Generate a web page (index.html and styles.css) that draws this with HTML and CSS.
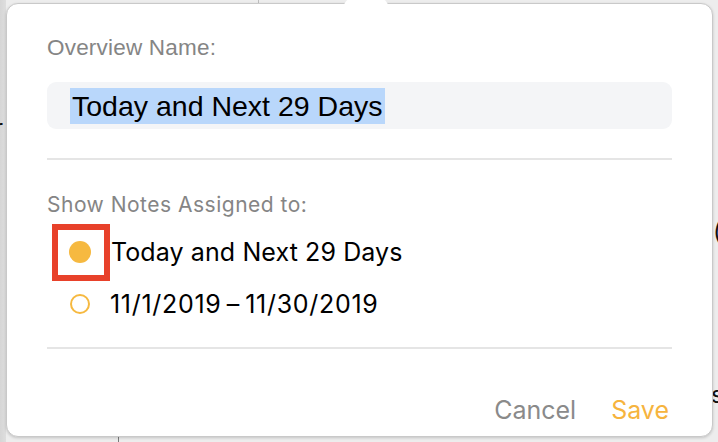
FILE: index.html
```html
<!DOCTYPE html>
<html lang="en">
<head>
    <meta charset="UTF-8">
    <meta name="viewport" content="width=device-width, initial-scale=1.0">
    <title>Overview Name</title>
    <link rel="stylesheet" href="styles.css">
</head>
<body>
    <div class="screen">
        <span class="behind-line"></span>
        <span class="behind-line bottom"></span>
        <span class="behind-glyph left">r</span>
        <span class="behind-glyph right-top">(</span>
        <span class="behind-glyph right-bottom">s</span>

        <div class="popover">
            <div class="field">
                <div class="label">Overview Name:</div>
                <div class="input"><span class="selected">Today and Next 29 Days</span></div>
            </div>

            <hr class="divider">

            <div class="assign">
                <div class="label wide">Show Notes Assigned to:</div>
                <div class="option">
                    <span class="mark focused"><span class="radio on"></span></span>
                    <span class="option-text">Today and Next 29 Days</span>
                </div>
                <div class="option">
                    <span class="mark"><span class="radio"></span></span>
                    <span class="option-text dates">11/1/2019&thinsp;&ndash;&thinsp;11/30/2019</span>
                </div>
            </div>

            <hr class="divider lower">

            <div class="actions">
                <button class="action cancel">Cancel</button>
                <button class="action save">Save</button>
            </div>
        </div>
    </div>
</body>
</html>
```

FILE: styles.css
```css
html, body {
    margin: 0;
    padding: 0;
}
body {
    width: 718px;
    height: 442px;
    overflow: hidden;
    background-color: #e9e9e9;
    font-family: Inter, "Liberation Sans", sans-serif;
}
.screen {
    position: relative;
    height: 442px;
    padding: 3px 5px 0 6px;
    box-sizing: border-box;
    background: linear-gradient(to right, #d6d6d6 0, #dedede 6px, #ededed 6px);
}

/* bits of the window behind the popover */
.behind-line {
    position: absolute;
    left: 258px;
    top: 0;
    width: 1px;
    height: 6px;
    background-color: #bdbdbd;
}
.behind-line.bottom {
    left: 118px;
    top: 437px;
    height: 5px;
    background-color: #7a7a7a;
}
.behind-glyph {
    position: absolute;
    color: #111;
    font-size: 24px;
    line-height: 24px;
}
.behind-glyph.left { left: -6px; top: 116px; }
.behind-glyph.right-top { left: 713px; top: 220px; }
.behind-glyph.right-bottom { left: 711px; top: 383px; }

.popover {
    position: relative;
    height: 434px;
    box-sizing: border-box;
    background-color: #fff;
    border: 1px solid #c9c9c9;
    border-radius: 12px;
    box-shadow: 0 1px 3px rgba(0, 0, 0, 0.18);
    padding: 31px 40px 0 40px;
}
.popover::before {
    content: "";
    position: absolute;
    left: 336px;
    top: -8px;
    width: 46px;
    height: 14px;
    background-color: #fff;
    border-radius: 14px 14px 0 0;
}

.label {
    font-family: "Liberation Sans", Arial, sans-serif;
    font-size: 22.5px;
    line-height: 26px;
    letter-spacing: 0.2px;
    color: #858585;
}
.label.wide {
    font-family: Inter, sans-serif;
    font-size: 21px;
    letter-spacing: 0.5px;
}

.input {
    margin-top: 21px;
    height: 47px;
    display: flex;
    align-items: center;
    padding-left: 23px;
    background-color: #f4f5f7;
    border-radius: 9px;
}
.selected {
    font-family: "Liberation Sans", Arial, sans-serif;
    font-size: 28.5px;
    line-height: 36px;
    padding: 0 2px;
    color: #000;
    background-color: #b9d7fb;
}

.divider {
    margin: 29px 0 0 0;
    border: none;
    height: 2px;
    background-color: #e5e5e5;
}
.divider.lower {
    margin-top: 17px;
}

.assign {
    margin-top: 32px;
}
.option {
    display: flex;
    align-items: center;
    height: 52px;
}
.assign .label + .option {
    margin-top: 8px;
}
.mark {
    width: 58px;
    height: 57px;
    margin-left: 5px;
    box-sizing: border-box;
    display: flex;
    align-items: center;
    justify-content: center;
    flex-shrink: 0;
}
.mark.focused {
    border: 6px solid #e8412a;
}
.radio {
    width: 20px;
    height: 20px;
    box-sizing: border-box;
    border: 2px solid #f6b940;
    border-radius: 50%;
    margin-left: -3px;
}
.radio.on {
    width: 22px;
    height: 22px;
    border: none;
    background-color: #f6b940;
}
.option-text {
    margin-left: 1px;
    font-size: 25px;
    letter-spacing: 0.1px;
    color: #000;
}
.option-text.dates {
    margin-left: 0;
    letter-spacing: 0.7px;
}

.actions {
    display: flex;
    justify-content: flex-end;
    gap: 35px;
    margin-top: 46px;
    padding-right: 3px;
}
.action {
    font-family: Inter, sans-serif;
    font-size: 25px;
    background: none;
    border: none;
    padding: 0;
    cursor: pointer;
}
.cancel {
    color: #8a8a8a;
}
.save {
    color: #f6b43e;
}
```
